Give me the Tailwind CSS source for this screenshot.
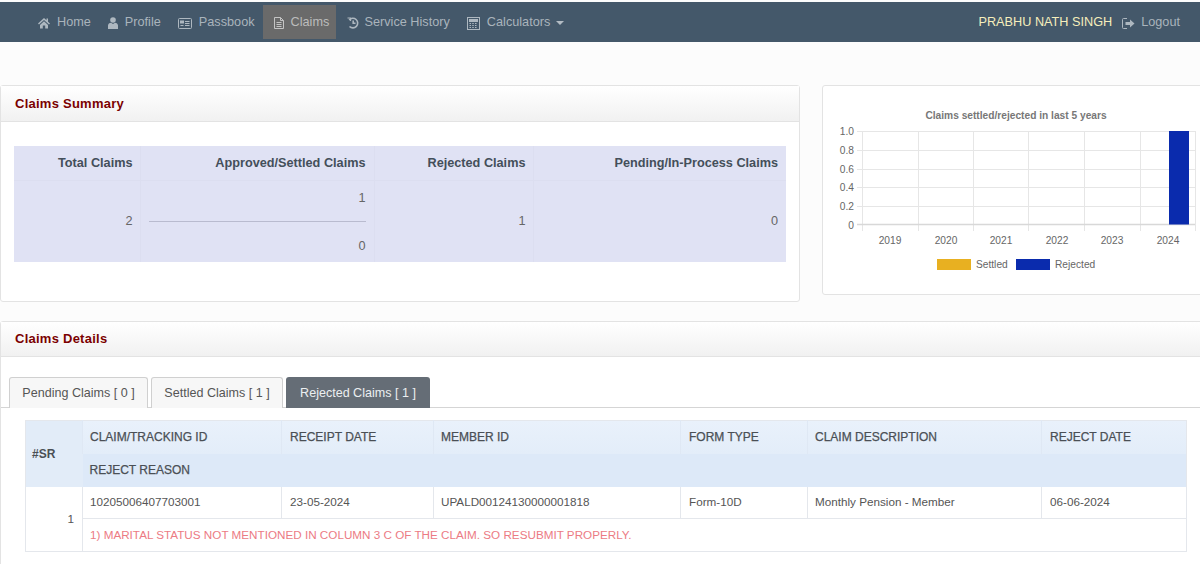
<!DOCTYPE html>
<html lang="en">
<head>
    <meta charset="UTF-8">
    <title>Claims</title>
    <script src="https://cdn.jsdelivr.net/npm/@tailwindcss/browser@4"></script>
</head>
<body class="bg-[#fcfcfc] text-[#555] font-['Liberation_Sans',Arial,sans-serif] text-[12.7px] w-[1200px] h-[564px] overflow-hidden">

    <!-- nav -->
    <nav class="mt-[2px] h-[40px] bg-[#44586a] flex items-center text-[#aab4bc]">
        <a class="flex items-center h-[34px] pt-[2px] ml-[38px] gap-[7px]">
            <svg class="w-[12px] h-[12px]" viewBox="0 0 12 12" fill="#aeb8c0"><path d="M6 1 L0 6.5 L1 7.5 L6 3 L11 7.5 L12 6.5 L10 4.7 V1.5 H8.5 V3.3 Z M2 8 L6 4.2 L10 8 V11.5 H7.2 V8.5 H4.8 V11.5 H2 Z"/></svg>
            Home
        </a>
        <a class="flex items-center h-[34px] pt-[2px] ml-[17px] gap-[7px]">
            <svg class="w-[10px] h-[12px]" viewBox="0 0 10 12" fill="#aeb8c0"><circle cx="5" cy="3" r="2.8"/><path d="M0 12 V8.5 C0 7 1.5 6 3 5.8 L5 7 L7 5.8 C8.500 6 10 7 10 8.500 V12 Z"/></svg>
            Profile
        </a>
        <a class="flex items-center h-[34px] pt-[2px] ml-[17px] gap-[7px]">
            <svg class="w-[14px] h-[11px]" viewBox="0 0 14 11" fill="none" stroke="#aeb8c0"><rect x="0.5" y="0.5" width="13" height="10" rx="1"/><rect x="2.500" y="3" width="3" height="2" fill="#aeb8c0"/><path d="M2.500 7.500 H5.500 M7 3.500 H11.500 M7 5.500 H11.500 M7 7.500 H11.500"/></svg>
            Passbook
        </a>
        <a class="flex items-center h-[34px] pt-[2px] ml-[8px] w-[73px] pl-[11px] gap-[7px] bg-[#6a6a6a] text-[#bcbcbc]">
            <svg class="w-[10px] h-[12px]" viewBox="0 0 10 12" fill="none" stroke="#c4c4c4"><path d="M0.500 0.500 H6.500 L9.500 3.500 V11.500 H0.500 Z M6.500 0.500 V3.500 H9.500 M2.500 5.500 H7.500 M2.500 7.500 H7.500 M2.500 9.500 H7.500"/></svg>
            Claims
        </a>
        <a class="flex items-center h-[34px] pt-[2px] ml-[11px] gap-[6px]">
            <svg class="w-[12px] h-[12px]" viewBox="0 0 12 12" fill="none" stroke="#aeb8c0" stroke-width="1.600"><path d="M2.200 3 A4.800 4.800 0 1 1 2.500 9.500"/><path d="M6.200 3.500 V6.300 H8.500"/><path d="M0.500 1 H3.500 V4" stroke-width="1.200"/></svg>
            Service History
        </a>
        <a class="flex items-center h-[34px] pt-[2px] ml-[17px] gap-[7px]">
            <svg class="w-[13px] h-[13px]" viewBox="0 0 13 13" fill="none" stroke="#aeb8c0"><rect x="0.500" y="0.500" width="12" height="12"/><rect x="2.500" y="2.500" width="8" height="2" fill="#aeb8c0"/><path d="M2.500 6.500 H10.500 M2.500 8.500 H10.500 M2.500 10.500 H10.500" stroke-dasharray="1.500 1.250"/></svg>
            Calculators
            <span class="-ml-[1px] w-0 h-0 border-x-[4px] border-x-transparent border-t-[4px] border-t-[#b3bcc4]"></span>
        </a>
        <span class="ml-auto pt-[2px] text-[#f5eebc]">PRABHU NATH SINGH</span>
        <a class="flex items-center h-[34px] pt-[2px] ml-[10px] mr-[20px] gap-[6px]">
            <svg class="w-[13px] h-[11px]" viewBox="0 0 13 11" fill="none" stroke="#aeb8c0"><path d="M5 0.500 H1.500 Q0.500 0.500 0.500 1.500 V9.500 Q0.500 10.500 1.500 10.500 H5"/><path d="M3.500 4 H8 V1.500 L12.500 5.500 L8 9.500 V7 H3.500 Z" fill="#aeb8c0" stroke="none"/></svg>
            Logout
        </a>
    </nav>

    <main class="flex items-start mt-[43px]">
        <!-- summary -->
        <section class="w-[800px] h-[217px] shrink-0 bg-white border border-[#e3e3e3] rounded-[3px]">
            <div class="h-[36px] flex items-center pl-[14px] bg-gradient-to-b from-white to-[#f1f1f1] border-b border-[#e3e3e3] font-bold text-[13px] tracking-[0.25px] text-[#7b0000]">Claims Summary</div>
            <div class="pt-[24px] pl-[13px]">
                <table class="w-[772px] h-[116px] table-fixed bg-[#e0e2f4] text-right text-[#666]">
                    <colgroup><col class="w-[126px]"><col class="w-[234px]"><col class="w-[159px]"><col></colgroup>
                    <thead>
                        <tr class="h-[34px] text-[#444f5a]">
                            <th class="font-bold pt-px pr-[7px] border-r border-b border-[#dcdef0]">Total Claims</th>
                            <th class="font-bold pt-px px-[8px] border-r border-b border-[#dcdef0]">Approved/Settled Claims</th>
                            <th class="font-bold pt-px pr-[7px] border-r border-b border-[#dcdef0]">Rejected Claims</th>
                            <th class="font-bold pt-px pr-[8px] border-b border-[#dcdef0]">Pending/In-Process Claims</th>
                        </tr>
                    </thead>
                    <tbody>
                        <tr>
                            <td class="pt-px pr-[7px] border-r border-[#dcdef0]">2</td>
                            <td class="pt-[2px] px-[8px] border-r border-[#dcdef0]">
                                <div>1</div>
                                <div class="h-px bg-[#b9bbcf] mt-[13px] mb-[15px]"></div>
                                <div>0</div>
                            </td>
                            <td class="pt-px pr-[7px] border-r border-[#dcdef0]">1</td>
                            <td class="pt-px pr-[8px]">0</td>
                        </tr>
                    </tbody>
                </table>
            </div>
        </section>

        <!-- chart -->
        <section class="ml-[22px] w-[400px] h-[210px] shrink-0 bg-white border border-[#e3e3e3] rounded-[3px]">
            <svg width="378" height="208" viewBox="823 86 378 208" font-family="Liberation Sans, Arial, sans-serif" font-size="10.200" fill="#666">
                <text x="1016" y="119" text-anchor="middle" font-weight="bold" fill="#777">Claims settled/rejected in last 5 years</text>
                <g stroke="#e6e6e6" fill="none">
                    <path d="M857 131.500 H1195 M857 150.500 H1195 M857 169.500 H1195 M857 187.500 H1195 M857 206.500 H1195"/>
                    <path d="M862.500 131 V231 M918.500 131 V231 M973.500 131 V231 M1028.500 131 V231 M1084.500 131 V231 M1140.500 131 V231 M1195.500 131 V231"/>
                    <path d="M857 224.500 H1195" stroke="#d8d8d8" stroke-width="1.500"/>
                </g>
                <rect x="1169" y="131" width="20" height="93.500" fill="#0a2bad"/>
                <g text-anchor="end">
                    <text x="854" y="135">1.0</text>
                    <text x="854" y="154">0.8</text>
                    <text x="854" y="173">0.6</text>
                    <text x="854" y="191">0.4</text>
                    <text x="854" y="210">0.2</text>
                    <text x="854" y="229">0</text>
                </g>
                <g text-anchor="middle">
                    <text x="890" y="244">2019</text>
                    <text x="946" y="244">2020</text>
                    <text x="1001" y="244">2021</text>
                    <text x="1057" y="244">2022</text>
                    <text x="1112" y="244">2023</text>
                    <text x="1168" y="244">2024</text>
                </g>
                <rect x="937" y="259" width="34" height="11" fill="#e8b021"/>
                <text x="976" y="268">Settled</text>
                <rect x="1016" y="259" width="34" height="11" fill="#0a2bad"/>
                <text x="1055" y="268">Rejected</text>
            </svg>
        </section>
    </main>

    <!-- details -->
    <section class="relative top-[19px] w-[1204px] h-[260px] bg-white border border-[#e3e3e3] rounded-[3px]">
        <div class="h-[35px] flex items-center pl-[14px] bg-gradient-to-b from-white to-[#f1f1f1] border-b border-[#e3e3e3] font-bold text-[13px] tracking-[0.25px] text-[#7b0000]">Claims Details</div>

        <div class="pt-[20px] pl-[8px] flex gap-[3px] border-b border-[#d5d5d5] h-[51px] text-[12.550px]">
            <a class="w-[139px] h-[31px] flex items-center justify-center bg-[#f7f7f7] border border-b-0 border-[#d0d0d0] rounded-t-[3px]">Pending Claims [ 0 ]</a>
            <a class="w-[132px] h-[31px] flex items-center justify-center bg-[#f7f7f7] border border-b-0 border-[#d0d0d0] rounded-t-[3px]">Settled Claims [ 1 ]</a>
            <a class="w-[144px] h-[31px] pt-px flex items-center justify-center bg-[#656d76] text-[#eceff1] rounded-t-[3px]">Rejected Claims [ 1 ]</a>
        </div>

        <div class="pt-[12px] pl-[24px]">
            <table class="w-[1162px] table-fixed border-collapse text-[11.700px] text-[#555] border border-[#e4e7ec]">
                <colgroup><col class="w-[57px]"><col class="w-[199px]"><col class="w-[152px]"><col class="w-[247px]"><col class="w-[127px]"><col class="w-[234px]"><col></colgroup>
                <thead class="text-[12px] text-[#4a4f55] text-left">
                    <tr class="h-[33px] bg-gradient-to-b from-[#e9f1fb] to-[#e3edf9]">
                        <th rowspan="2" class="font-bold pl-[6px] bg-[#e2ecf8]">#SR</th>
                        <th class="font-normal pl-[7px] border-x border-[#dfe8f4] [-webkit-text-stroke:0.25px_#4a4f55]">CLAIM/TRACKING ID</th>
                        <th class="font-normal pl-[8px] border-x border-[#dfe8f4] [-webkit-text-stroke:0.25px_#4a4f55]">RECEIPT DATE</th>
                        <th class="font-normal pl-[7px] border-x border-[#dfe8f4] [-webkit-text-stroke:0.25px_#4a4f55]">MEMBER ID</th>
                        <th class="font-normal pl-[8px] border-x border-[#dfe8f4] [-webkit-text-stroke:0.25px_#4a4f55]">FORM TYPE</th>
                        <th class="font-normal pl-[7px] border-x border-[#dfe8f4] [-webkit-text-stroke:0.25px_#4a4f55]">CLAIM DESCRIPTION</th>
                        <th class="font-normal pl-[8px] border-l border-[#dfe8f4] [-webkit-text-stroke:0.25px_#4a4f55]">REJECT DATE</th>
                    </tr>
                    <tr class="h-[33px] bg-[#dde9f8]">
                        <th colspan="6" class="font-normal pl-[7px] [-webkit-text-stroke:0.25px_#4a4f55]">REJECT REASON</th>
                    </tr>
                </thead>
                <tbody>
                    <tr class="h-[32px]">
                        <td rowspan="2" class="text-right pr-[8px] text-[#555] border-r border-[#e4e7ec]">1</td>
                        <td class="pl-[7px] border-r border-b border-[#e4e7ec]">10205006407703001</td>
                        <td class="pl-[8px] border-r border-b border-[#e4e7ec]">23-05-2024</td>
                        <td class="pl-[7px] border-r border-b border-[#e4e7ec]">UPALD00124130000001818</td>
                        <td class="pl-[8px] border-r border-b border-[#e4e7ec]">Form-10D</td>
                        <td class="pl-[7px] border-r border-b border-[#e4e7ec]">Monthly Pension - Member</td>
                        <td class="pl-[8px] border-b border-[#e4e7ec]">06-06-2024</td>
                    </tr>
                    <tr class="h-[33px]">
                        <td colspan="6" class="pl-[7px] text-[#ec7b84]">1) MARITAL STATUS NOT MENTIONED IN COLUMN 3 C OF THE CLAIM. SO RESUBMIT PROPERLY.</td>
                    </tr>
                </tbody>
            </table>
        </div>
    </section>
</body>
</html>
